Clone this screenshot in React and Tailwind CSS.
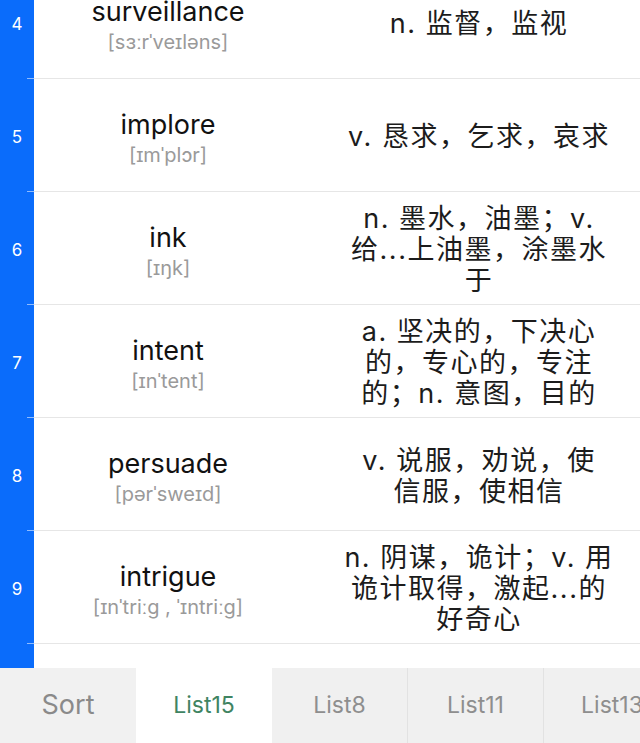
import React from "react";

const rows = [
  { n: 4, word: "surveillance", ph: "[sɜːrˈveɪləns]", mean: ["n. 监督，监视"] },
  { n: 5, word: "implore", ph: "[ɪmˈplɔr]", mean: ["v. 恳求，乞求，哀求"] },
  { n: 6, word: "ink", ph: "[ɪŋk]", mean: ["n. 墨水，油墨；v.", "给...上油墨，涂墨水", "于"] },
  { n: 7, word: "intent", ph: "[ɪnˈtent]", mean: ["a. 坚决的，下决心", "的，专心的，专注", "的；n. 意图，目的"] },
  { n: 8, word: "persuade", ph: "[pərˈsweɪd]", mean: ["v. 说服，劝说，使", "信服，使相信"] },
  { n: 9, word: "intrigue", ph: "[ɪnˈtriːg , ˈɪntriːg]", mean: ["n. 阴谋，诡计；v. 用", "诡计取得，激起...的", "好奇心"] },
  { n: 10, word: "", ph: "", mean: [] },
];

const font = { fontFamily: 'Inter, "Noto Sans CJK SC", sans-serif' };

function Row({ r }) {
  return (
    <div className="flex h-[113px] shrink-0">
      <div className="w-[34px] bg-[#0a6cfb] flex flex-col">
        <div className="flex-1 flex items-center justify-center text-white text-[17px] pt-[6px]">{r.n}</div>
        <div className="self-end w-[7px] h-px bg-[#8fbcff]" />
      </div>
      <div className="flex-1 flex border-b border-[#e6e6e6]">
        <div className="w-[268px] flex flex-col items-center justify-center pt-[6px]">
          {r.word && (
            <>
              <div className="text-[27px] leading-[30px] text-[#111]">{r.word}</div>
              <div className="text-[20px] leading-[24px] mt-[3px] text-[#9a9a9a]">{r.ph}</div>
            </>
          )}
        </div>
        <div className="flex-1 pl-[16px] flex flex-col items-center justify-center text-[27px] tracking-[1.5px] leading-[31px] text-[#1c1c1c] text-center pt-[3px]">
          {r.mean.map((m, i) => (
            <div key={i} className="whitespace-nowrap">{m}</div>
          ))}
        </div>
      </div>
    </div>
  );
}

export default function App() {
  const tabs = [
    { t: "Sort", cls: "bg-[#f1f1f1] text-[#8a8a8a] text-[27px]" },
    { t: "List15", cls: "bg-white text-[#3f8462] text-[23px]" },
    { t: "List8", cls: "bg-[#f0f0f0] text-[#8e8e8e] text-[23px] border-r border-[#e2e2e2]" },
    { t: "List11", cls: "bg-[#f0f0f0] text-[#8e8e8e] text-[23px] border-r border-[#e2e2e2]" },
    { t: "List13", cls: "bg-[#f0f0f0] text-[#8e8e8e] text-[23px]" },
  ];
  return (
    <div className="w-[640px] h-[743px] bg-white overflow-hidden flex flex-col" style={font}>
      <div className="h-[668px] overflow-hidden flex flex-col">
        <div className="-mt-[34px] flex flex-col">
          {rows.map((r) => (
            <Row key={r.n} r={r} />
          ))}
        </div>
      </div>
      <div className="flex h-[75px] overflow-hidden">
        {tabs.map((t) => (
          <div key={t.t} className={`w-[136px] shrink-0 flex items-center justify-center ${t.cls}`}>
            {t.t}
          </div>
        ))}
      </div>
    </div>
  );
}
